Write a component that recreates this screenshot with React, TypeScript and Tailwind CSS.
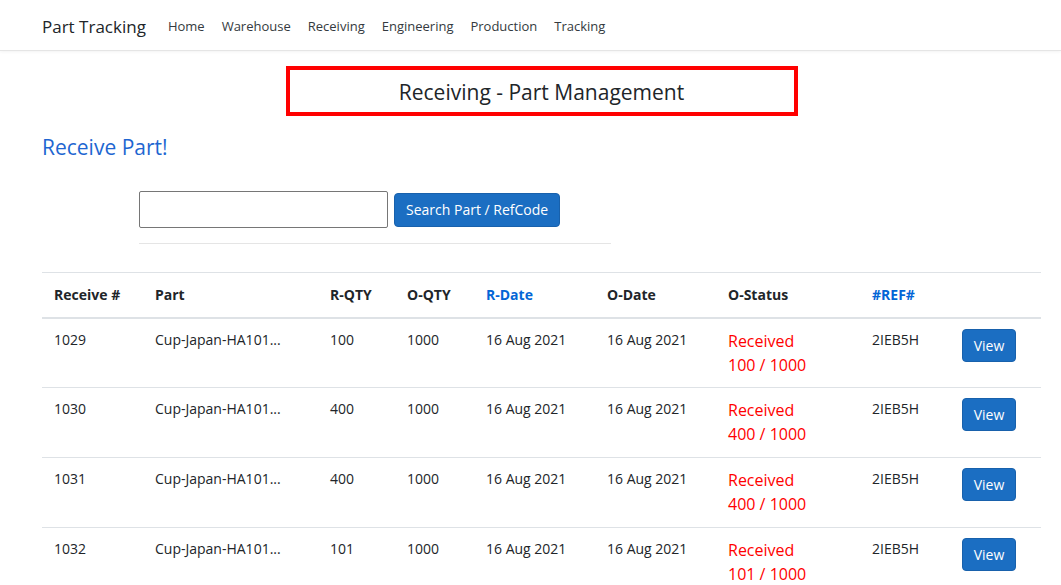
import React from "react";

const rows = [
  { id: "1029", part: "Cup-Japan-HA101...", rqty: "100", oqty: "1000", rdate: "16 Aug 2021", odate: "16 Aug 2021", ref: "2IEB5H" },
  { id: "1030", part: "Cup-Japan-HA101...", rqty: "400", oqty: "1000", rdate: "16 Aug 2021", odate: "16 Aug 2021", ref: "2IEB5H" },
  { id: "1031", part: "Cup-Japan-HA101...", rqty: "400", oqty: "1000", rdate: "16 Aug 2021", odate: "16 Aug 2021", ref: "2IEB5H" },
  { id: "1032", part: "Cup-Japan-HA101...", rqty: "101", oqty: "1000", rdate: "16 Aug 2021", odate: "16 Aug 2021", ref: "2IEB5H" },
];

const navLinks = ["Home", "Warehouse", "Receiving", "Engineering", "Production", "Tracking"];

export default function App() {
  return (
    <div className="min-h-[585px] bg-white text-[#212529] font-['Segoe_UI','Open_Sans',sans-serif] overflow-hidden">
      <nav className="h-[51px] flex items-center pl-[42px] pt-[3px] border-b border-[#e5e5e5] shadow-[0_1px_3px_rgba(0,0,0,0.05)]">
        <span className="text-[17px] mr-[22px] text-[#212529]">Part Tracking</span>
        <div className="flex gap-[17px] text-[13px] text-[#343a40]">
          {navLinks.map((l) => (
            <span key={l}>{l}</span>
          ))}
        </div>
      </nav>

      <main className="pl-[42px] pr-[20px]">
        <div className="flex justify-center pt-[15px]">
          <div className="w-[512px] h-[50px] pt-[3px] border-4 border-[#ff0000] flex items-center justify-center text-[21px]">
            Receiving - Part Management
          </div>
        </div>

        <h3 className="text-[21px] text-[#1e66d1] mt-[16px] leading-[30px]">Receive Part!</h3>

        <div className="ml-[97px] w-[472px] mt-[29px]">
          <div className="flex items-center gap-[6px]">
            <input className="w-[249px] h-[37px] border border-[#767676] rounded-[2px] outline-none" />
            <button className="h-[34px] px-[11px] bg-[#1b6ec2] border border-[#1861ac] text-white text-[14px] rounded-[4px]">
              Search Part / RefCode
            </button>
          </div>
          <div className="mt-[15px] border-t border-[#e5e5e5]" />
        </div>

        <table className="w-full mt-[28px] text-[14px] border-collapse">
          <thead>
            <tr className="border-t border-[#dee2e6] border-b-2 border-b-[#dee2e6] text-left font-bold">
              <th className="px-[12px] h-[45px] w-[101px]">Receive #</th>
              <th className="px-[12px] w-[175px]">Part</th>
              <th className="px-[12px] w-[77px]">R-QTY</th>
              <th className="px-[12px] w-[79px]">O-QTY</th>
              <th className="px-[12px] w-[121px] text-[#0366d6]">R-Date</th>
              <th className="px-[12px] w-[121px]">O-Date</th>
              <th className="px-[12px] w-[144px]">O-Status</th>
              <th className="px-[12px] w-[90px] text-[#0366d6]">#REF#</th>
              <th className="px-[12px]"></th>
            </tr>
          </thead>
          <tbody>
            {rows.map((r) => (
              <tr key={r.id} className="border-b border-[#dee2e6] align-top">
                <td className="px-[12px] pt-[10px] h-[70px]">{r.id}</td>
                <td className="px-[12px] pt-[10px]">{r.part}</td>
                <td className="px-[12px] pt-[10px]">{r.rqty}</td>
                <td className="px-[12px] pt-[10px]">{r.oqty}</td>
                <td className="px-[12px] pt-[10px]">{r.rdate}</td>
                <td className="px-[12px] pt-[10px]">{r.odate}</td>
                <td className="px-[12px] pt-[10px] text-[16px] leading-[24px] text-[#ff0000]">
                  <div>Received</div>
                  <div>{r.rqty} / {r.oqty}</div>
                </td>
                <td className="px-[12px] pt-[10px]">{r.ref}</td>
                <td className="px-[12px] pt-[10px]">
                  <button className="h-[33px] w-[54px] bg-[#1b6ec2] border border-[#1861ac] text-white text-[14px] rounded-[4px]">
                    View
                  </button>
                </td>
              </tr>
            ))}
          </tbody>
        </table>
      </main>
    </div>
  );
}
